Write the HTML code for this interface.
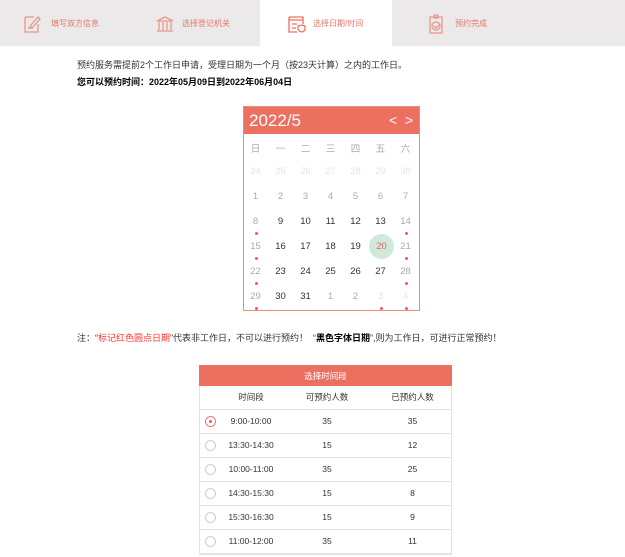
<!DOCTYPE html>
<html><head><meta charset="utf-8"><style>
*{margin:0;padding:0;box-sizing:border-box}
body{width:625px;height:557px;overflow:hidden;background:#fff;font-family:"Liberation Sans","Noto Sans CJK SC",sans-serif;font-size:9px;color:#333;position:relative}
.bar{position:absolute;left:0;top:0;width:625px;height:46px;background:#ebe9e9}
.act{position:absolute;left:260px;top:0;width:132px;height:47px;background:#fff}
.tab{position:absolute;top:18px;font-size:8px;color:#e8786a}
.ic{position:absolute;top:14px}
.a{position:absolute;white-space:nowrap}
.cal{position:absolute;left:243px;top:106px;width:177px;height:205px;border:1px solid #ee8a7c}
.ch{position:absolute;left:0;top:0;width:175px;height:27px;background:#ec7060;color:#fff}
.c{position:absolute;width:25px;text-align:center;font-size:9.5px}
.g{color:#e5e5e5}.m{color:#aaa}.k{color:#333}
.dot{position:absolute;width:3px;height:3px;border-radius:50%;background:#f55}
table{position:absolute;left:199px;top:365px;width:253px;border-collapse:collapse;font-size:8.5px}
td,th{border-bottom:1px solid #f0dcdc;text-align:center;font-weight:normal}
.tw{position:absolute;left:199px;top:365px;width:253px;height:190px;border:1px solid #f0dcdc;border-top:none}
.r{display:inline-block;width:11px;height:11px;border:1px solid #ccc;border-radius:50%;vertical-align:middle}
</style></head><body>
<div class="bar"></div><div class="act"></div>
<svg class="ic" style="left:22px" width="20" height="20" viewBox="0 0 20 20" fill="none" stroke="#e8978b" stroke-width="1.3"><path d="M3 3h9M3 3v15h13v-8M6 14h5M9 11l7-8 2 2-7 8-3 1z"/></svg>
<div class="tab" style="left:51px">填写双方信息</div>
<svg class="ic" style="left:155px" width="20" height="20" viewBox="0 0 20 20" fill="none" stroke="#e8978b" stroke-width="1.3"><path d="M2 7l8-4 8 4zM4 8v8M8 8v8M12 8v8M16 8v8M2 17h16"/></svg>
<div class="tab" style="left:182px">选择登记机关</div>
<svg class="ic" style="left:286px" width="20" height="20" viewBox="0 0 20 20" fill="none" stroke="#ec7060" stroke-width="1.3"><path d="M3 3h14v7M3 3v15h8M3 6h14M6 10h5M6 14h4M12 12l4-1 3 1v3c0 2-3 3-3 3s-4-1-4-3z"/></svg>
<div class="tab" style="left:313px">选择日期/时间</div>
<svg class="ic" style="left:426px" width="20" height="20" viewBox="0 0 20 20" fill="none" stroke="#e8978b" stroke-width="1.3"><path d="M4 3h12v16H4zM8 1h4v3H8z"/><circle cx="10" cy="12" r="4"/><path d="M8 12l2 2 3-3"/></svg>
<div class="tab" style="left:455px">预约完成</div>

<div class="a" style="left:77px;top:58px">预约服务需提前2个工作日申请，受理日期为一个月（按23天计算）之内的工作日。</div>
<div class="a" style="left:77px;top:75px;font-weight:bold;color:#000">您可以预约时间：2022年05月09日到2022年06月04日</div>

<div class="cal">
<div class="ch"><span class="a" style="left:5px;top:4px;font-size:17px">2022/5</span><span class="a" style="left:145px;top:5px;font-size:14px">&lt;&nbsp;&nbsp;&gt;</span></div>
<div style="position:absolute;left:-1px;top:-2px;width:177px;height:205px">
<div class="c m" style="left:0;top:36px">日</div><div class="c m" style="left:25px;top:36px">一</div><div class="c m" style="left:50px;top:36px">二</div><div class="c m" style="left:75px;top:36px">三</div><div class="c m" style="left:100px;top:36px">四</div><div class="c m" style="left:125px;top:36px">五</div><div class="c m" style="left:150px;top:36px">六</div>
<div class="c g" style="left:0;top:61px">24</div><div class="c g" style="left:25px;top:61px">25</div><div class="c g" style="left:50px;top:61px">26</div><div class="c g" style="left:75px;top:61px">27</div><div class="c g" style="left:100px;top:61px">28</div><div class="c g" style="left:125px;top:61px">29</div><div class="c g" style="left:150px;top:61px">30</div>
<div class="c m" style="left:0;top:86px">1</div><div class="c m" style="left:25px;top:86px">2</div><div class="c m" style="left:50px;top:86px">3</div><div class="c m" style="left:75px;top:86px">4</div><div class="c m" style="left:100px;top:86px">5</div><div class="c m" style="left:125px;top:86px">6</div><div class="c m" style="left:150px;top:86px">7</div>
<div class="c m" style="left:0;top:111px">8</div><div class="c k" style="left:25px;top:111px">9</div><div class="c k" style="left:50px;top:111px">10</div><div class="c k" style="left:75px;top:111px">11</div><div class="c k" style="left:100px;top:111px">12</div><div class="c k" style="left:125px;top:111px">13</div><div class="c m" style="left:150px;top:111px">14</div>
<div style="position:absolute;left:126px;top:129px;width:25px;height:25px;border-radius:50%;background:#cfe9da"></div>
<div class="c m" style="left:0;top:136px">15</div><div class="c k" style="left:25px;top:136px">16</div><div class="c k" style="left:50px;top:136px">17</div><div class="c k" style="left:75px;top:136px">18</div><div class="c k" style="left:100px;top:136px">19</div><div class="c" style="left:126px;top:136px;color:#f06060">20</div><div class="c m" style="left:150px;top:136px">21</div>
<div class="c m" style="left:0;top:161px">22</div><div class="c k" style="left:25px;top:161px">23</div><div class="c k" style="left:50px;top:161px">24</div><div class="c k" style="left:75px;top:161px">25</div><div class="c k" style="left:100px;top:161px">26</div><div class="c k" style="left:125px;top:161px">27</div><div class="c m" style="left:150px;top:161px">28</div>
<div class="c m" style="left:0;top:186px">29</div><div class="c k" style="left:25px;top:186px">30</div><div class="c k" style="left:50px;top:186px">31</div><div class="c m" style="left:75px;top:186px">1</div><div class="c m" style="left:100px;top:186px">2</div><div class="c g" style="left:125px;top:186px">3</div><div class="c g" style="left:150px;top:186px">4</div>
<div class="dot" style="left:12px;top:127px"></div><div class="dot" style="left:162px;top:127px"></div>
<div class="dot" style="left:12px;top:152px"></div><div class="dot" style="left:162px;top:152px"></div>
<div class="dot" style="left:12px;top:177px"></div><div class="dot" style="left:162px;top:177px"></div>
<div class="dot" style="left:12px;top:202px"></div><div class="dot" style="left:137px;top:202px"></div><div class="dot" style="left:162px;top:202px"></div>
</div></div>

<div class="a" style="left:77px;top:331px">注：“<span style="color:#f33">标记红色圆点日期</span>”代表非工作日，不可以进行预约！&nbsp;&nbsp;“<b style="color:#000">黑色字体日期</b>”,则为工作日，可进行正常预约！</div>

<div class="tw"></div>
<table>
<tr style="height:21px;background:#ec7060;color:#fff"><td colspan="4" style="border:none">选择时间段</td></tr>
<tr style="height:23px"><td style="width:22px"></td><td style="width:60px">时间段</td><td style="width:92px">可预约人数</td><td>已预约人数</td></tr>
<tr style="height:24px"><td><span class="r" style="border-color:#e77;position:relative"><span style="position:absolute;left:3px;top:3px;width:3px;height:3px;border-radius:50%;background:#e55"></span></span></td><td>9:00-10:00</td><td>35</td><td>35</td></tr>
<tr style="height:24px"><td><span class="r"></span></td><td>13:30-14:30</td><td>15</td><td>12</td></tr>
<tr style="height:24px"><td><span class="r"></span></td><td>10:00-11:00</td><td>35</td><td>25</td></tr>
<tr style="height:24px"><td><span class="r"></span></td><td>14:30-15:30</td><td>15</td><td>8</td></tr>
<tr style="height:24px"><td><span class="r"></span></td><td>15:30-16:30</td><td>15</td><td>9</td></tr>
<tr style="height:24px"><td><span class="r"></span></td><td>11:00-12:00</td><td>35</td><td>11</td></tr>
</table>
</body></html>
